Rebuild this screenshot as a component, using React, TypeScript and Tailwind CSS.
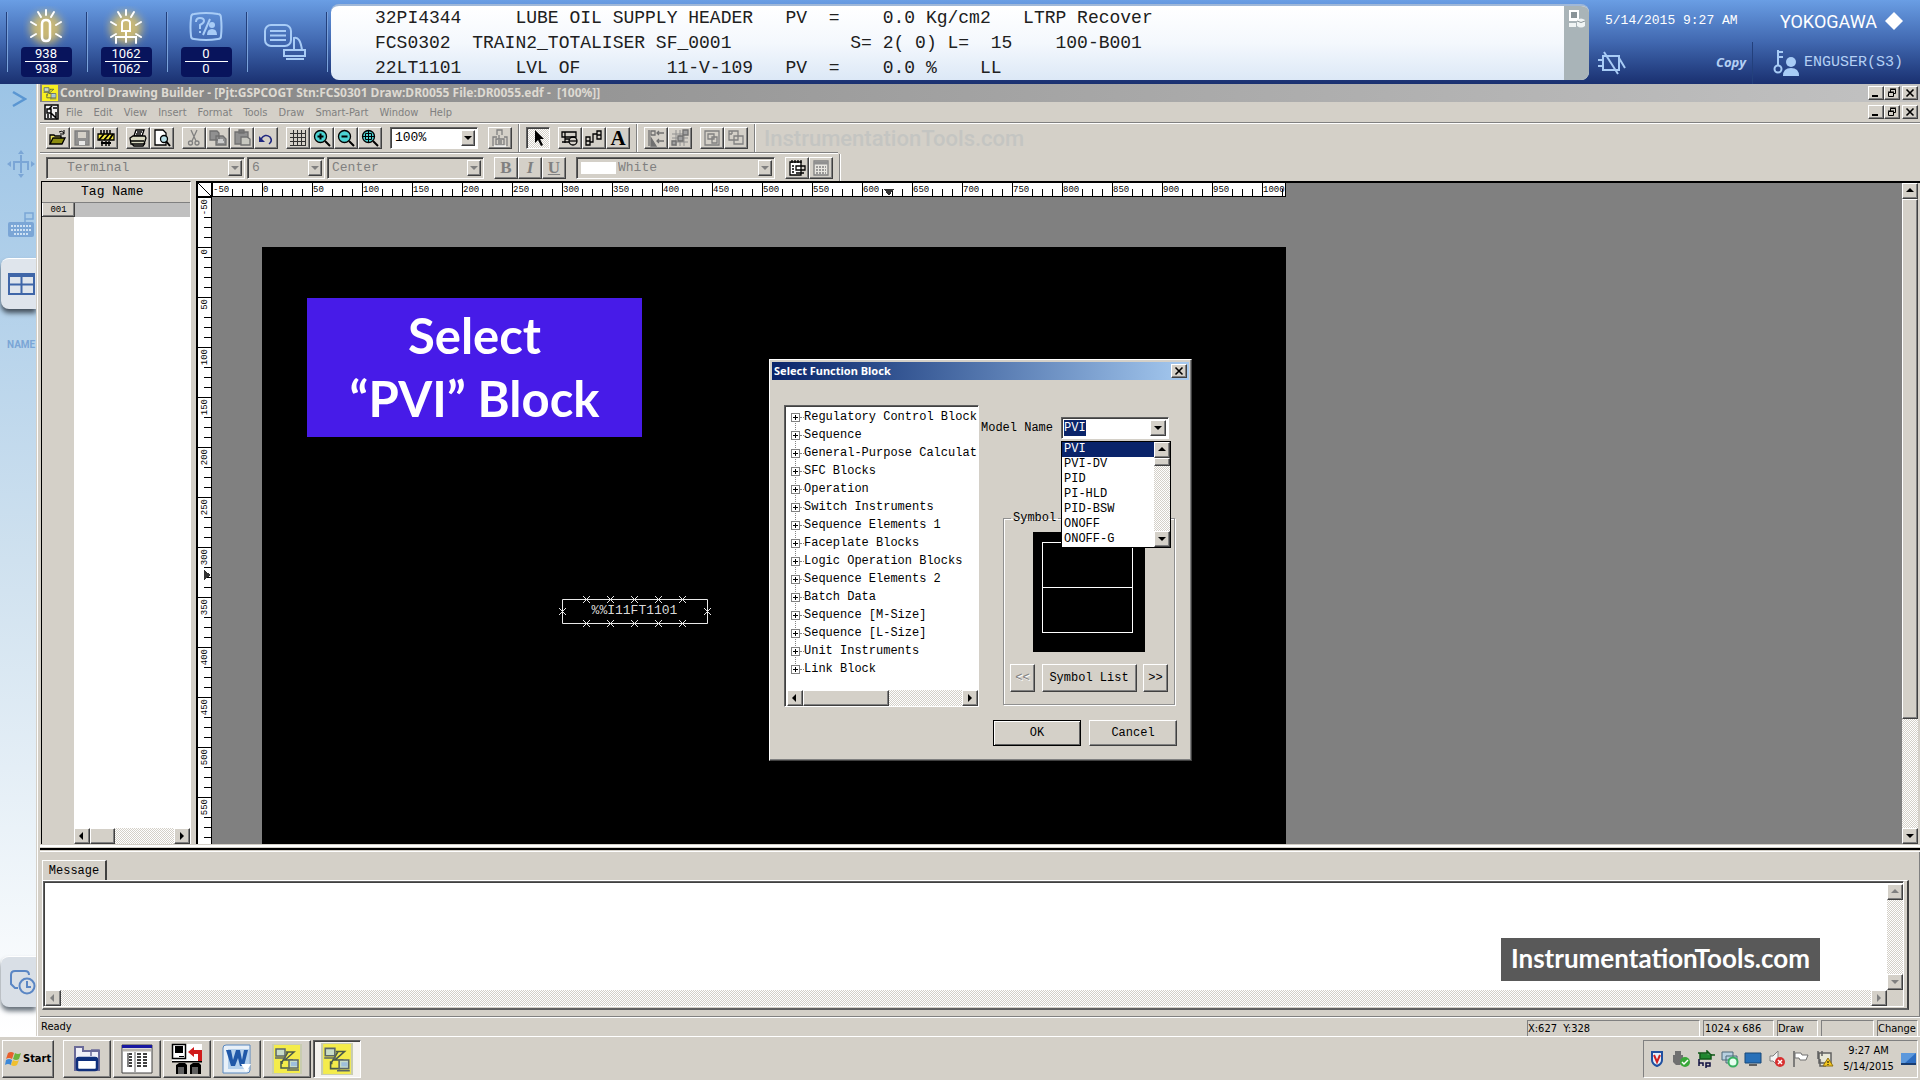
import { FC, ReactNode } from 'react';
import clsx from 'clsx';

const MONO = "font-['Liberation_Mono','Courier_New',monospace]";
const RAISED =
  'bg-[#d4d0c8] border border-t-white border-l-white border-r-[#404040] border-b-[#404040] shadow-[inset_-1px_-1px_0_#808080]';
const SUNKEN =
  'border border-t-[#606060] border-l-[#606060] border-r-white border-b-white shadow-[inset_1px_1px_0_#404040]';
const DITHER =
  'bg-[repeating-conic-gradient(#ffffff_0_25%,#d4d0c8_0_50%)] bg-[length:2px_2px]';

const ALARMS = [
  '32PI4344     LUBE OIL SUPPLY HEADER   PV  =    0.0 Kg/cm2   LTRP Recover',
  'FCS0302  TRAIN2_TOTALISER SF_0001           S= 2( 0) L=  15    100-B001',
  '22LT1101     LVL OF        11-V-109   PV  =    0.0 %    LL',
];

const MENUS = [
  'File',
  'Edit',
  'View',
  'Insert',
  'Format',
  'Tools',
  'Draw',
  'Smart-Part',
  'Window',
  'Help',
];

const TREE = [
  'Regulatory Control Block',
  'Sequence',
  'General-Purpose Calculat',
  'SFC Blocks',
  'Operation',
  'Switch Instruments',
  'Sequence Elements 1',
  'Faceplate Blocks',
  'Logic Operation Blocks',
  'Sequence Elements 2',
  'Batch Data',
  'Sequence [M-Size]',
  'Sequence [L-Size]',
  'Unit Instruments',
  'Link Block',
];

const MODELS = ['PVI', 'PVI-DV', 'PID', 'PI-HLD', 'PID-BSW', 'ONOFF', 'ONOFF-G'];

const H_MARKS = Array.from({ length: 22 }, (_, i) => i * 50 - 50);
const V_MARKS = Array.from({ length: 13 }, (_, i) => i * 50 - 50);

/* Small pieces */

const ARROWS = {
  up: 'M0 5h8L4 1z',
  down: 'M0 2h8L4 6z',
  left: 'M5 0v8L1 4z',
  right: 'M2 0v8l4-4z',
};

const Arrow: FC<{ dir: keyof typeof ARROWS; dim?: boolean }> = ({ dir, dim }) => (
  <svg width="8" height="8" viewBox="0 0 8 8" aria-hidden="true">
    <path d={ARROWS[dir]} fill={dim ? '#808080' : '#000'} />
  </svg>
);

const ScrollButton: FC<{ dir: keyof typeof ARROWS; dim?: boolean }> = ({
  dir,
  dim,
}) => (
  <button
    type="button"
    aria-label={`Scroll ${dir}`}
    className={clsx(RAISED, 'size-4 shrink-0 flex items-center justify-center')}
  >
    <Arrow dir={dir} dim={dim} />
  </button>
);

const Separator: FC = () => (
  <div className="w-0.5 mx-1.5 self-stretch border-l border-l-[#808080] border-r border-r-white" />
);

const Tool: FC<{ label: string; pressed?: boolean; children: ReactNode }> = ({
  label,
  pressed,
  children,
}) => (
  <button
    type="button"
    aria-label={label}
    className={clsx(
      'w-6 h-[22px] flex items-center justify-center',
      pressed ? [SUNKEN, DITHER] : RAISED,
    )}
  >
    {children}
  </button>
);

const Icon: FC<{ children: ReactNode }> = ({ children }) => (
  <svg
    width="18"
    height="18"
    viewBox="0 0 18 18"
    fill="none"
    stroke="#000"
    strokeWidth="1.3"
    aria-hidden="true"
  >
    {children}
  </svg>
);

const Combo: FC<{
  label: string;
  value: string;
  className: string;
  disabled?: boolean;
  swatch?: boolean;
  indent?: string;
}> = ({ label, value, className, disabled, swatch, indent = 'pl-1' }) => (
  <div
    className={clsx(
      SUNKEN,
      'relative h-[22px] flex items-center p-0.5',
      disabled ? 'text-[#808080]' : 'bg-white',
      className,
    )}
  >
    {swatch && <span className="w-[35px] h-3 ml-0.5 bg-white shrink-0" />}
    <select
      aria-label={label}
      disabled={disabled}
      defaultValue={value}
      className={clsx(
        MONO,
        indent,
        'flex-1 min-w-0 h-full appearance-none bg-transparent text-[13px] leading-4 opacity-100 outline-none',
      )}
    >
      <option>{value}</option>
    </select>
    <span
      className={clsx(
        RAISED,
        'w-3.5 h-full flex items-center justify-center pointer-events-none',
      )}
    >
      <Arrow dir="down" dim={disabled} />
    </span>
  </div>
);

const CloseGlyph: FC = () => (
  <svg width="10" height="10" viewBox="0 0 10 10" stroke="#000" strokeWidth="1.600">
    <path d="M1.500 1.500l7 7M8.500 1.500l-7 7" />
  </svg>
);

const WindowButtons: FC = () => (
  <div className="flex pr-0.5">
    <button type="button" aria-label="Minimize" className={clsx(RAISED, 'w-4 h-3.5 flex items-center justify-center')}>
      <svg width="10" height="10" viewBox="0 0 10 10"><path d="M1 7h6v2H1z" /></svg>
    </button>
    <button type="button" aria-label="Restore" className={clsx(RAISED, 'w-4 h-3.5 flex items-center justify-center')}>
      <svg width="10" height="10" viewBox="0 0 10 10" fill="none" stroke="#000">
        <path d="M3.500 4V1.500h5v4H7M3 1h6M1.500 4.500h5v4h-5zM1 4h6" />
      </svg>
    </button>
    <button type="button" aria-label="Close" className={clsx(RAISED, 'w-4 h-3.5 ml-0.5 flex items-center justify-center')}>
      <CloseGlyph />
    </button>
  </div>
);

/* Boxes-and-wires logo of the builder, used in the title bar and the taskbar */
const BuilderIcon: FC<{ size: number; soft?: boolean }> = ({ size, soft }) => (
  <svg width={size} height={size} viewBox="0 0 30 30" aria-hidden="true">
    <path fill={soft ? '#c8ccb0' : '#f8f020'} d="M0 0h30v30H0z" />
    <path fill={soft ? '#f4ec4a' : '#f8f020'} d="M2 1h26v28H2z" />
    <g stroke="#4a5a4a" strokeWidth="1.500" fill="none">
      <path d="M14 8h8l-9 8h8M16 8l-6 10v2M9 17v7h9" />
    </g>
    <g stroke="#5a6668" strokeWidth="1.500" fill="#c8dcc8">
      <path d="M4 5h9v7H4zM17 16h9v8h-9z" />
      <path d="M3 14h11M15 26h12" />
    </g>
    <path fill="#9fc0dc" d="M19 18h6v4h-6z" />
  </svg>
);

/* Header */

const Counter: FC<{
  label: string;
  top: string;
  bottom: string;
  children: ReactNode;
}> = ({ label, top, bottom, children }) => (
  <div className="relative w-20 flex flex-col items-center">
    <span className="absolute left-0 top-3 h-[60px] w-0.5 border-l border-l-[#23407c] border-r border-r-[#7aa2dc]" />
    <button type="button" aria-label={label} className="h-[47px] flex items-center justify-center pt-1.5">
      {children}
    </button>
    <div className="w-[51px] h-[30px] rounded-sm bg-[#08145c] px-1 text-center text-[13px] leading-[14px] text-white font-['Roboto',sans-serif]">
      <div className="border-b border-white">{top}</div>
      <div>{bottom}</div>
    </div>
  </div>
);

const Lamp: FC<{ children: ReactNode }> = ({ children }) => (
  <svg width="46" height="42" viewBox="0 0 46 42" aria-hidden="true">
    <circle cx="23" cy="22" r="16" fill="#e0c468" className="blur-[4px]" opacity="0.85" />
    <g stroke="#fff" strokeWidth="2" fill="none" strokeLinecap="round">
      <path d="M23 4v5M15 6l3 5M31 6l-3 5M8 16l5 3M38 16l-5 3M8 31l5-3M38 31l-5-3" />
      {children}
    </g>
  </svg>
);

const Header: FC = () => (
  <header className="h-[84px] flex shrink-0 bg-linear-to-b from-[#6a9ee4] via-[#4168b0] to-[#1a3070]">
    <div className="w-1.5" />
    <Counter label="Process alarms" top="938" bottom="938">
      <Lamp>
        <path d="M19 31V18q0-4 4-4t4 4v13q0 4-4 4t-4-4z" strokeWidth="2.500" />
      </Lamp>
    </Counter>
    <Counter label="System alarms" top="1062" bottom="1062">
      <Lamp>
        <path d="M19 25v-8q0-3 4-3t4 3v8zM23 25v11M13 37v-6h20v6" />
      </Lamp>
    </Counter>
    <Counter label="Operator guide" top="0" bottom="0">
      <svg width="36" height="30" viewBox="0 0 36 30" fill="none" stroke="#a8ccf6" strokeWidth="2" aria-hidden="true">
        <path d="M6 2q12-2 24 0q3 0 3 4q1 9 0 18q0 3-3 3q-12 2-24 0q-3 0-3-3q-1-9 0-18q0-4 3-4z" />
        <path d="M8 10q0-4 4-4t4 3q0 2-4 4v4M12 19v2M22 7l-7 16" />
        <circle cx="24" cy="13" r="3" fill="#a8ccf6" stroke="none" />
        <path d="M19 23q0-6 5-6t5 6z" fill="#a8ccf6" stroke="none" />
      </svg>
    </Counter>
    <div className="relative w-20 pl-4 pt-5">
      <span className="absolute left-0 top-3 h-[60px] w-0.5 border-l border-l-[#23407c] border-r border-r-[#7aa2dc]" />
      <button type="button" aria-label="Message list">
        <svg width="46" height="42" viewBox="0 0 46 42" fill="none" stroke="#a8ccf6" strokeWidth="2" aria-hidden="true">
          <rect x="3" y="5" width="26" height="21" rx="6" />
          <path d="M8 11h16M8 15.500h16M8 20h16" />
          <path d="M32 30V18q6-2 8 12M22 30h21v6H22zM24 39h18" />
        </svg>
      </button>
    </div>
    <span className="mt-3 h-[60px] w-0.5 border-l border-l-[#23407c] border-r border-r-[#7aa2dc]" />
    <div className="flex flex-1 min-w-0 ml-[3px] my-1 rounded-lg overflow-hidden border-t-2 border-[#a0b8d8] bg-linear-to-b from-white via-[#f4f8fd] to-[#dce8f6]">
      <div className={clsx(MONO, 'flex-1 min-w-0 pl-11 text-lg leading-[25px] text-[#202020]')}>
        {ALARMS.map((line) => (
          <div key={line} className="whitespace-pre">
            {line}
          </div>
        ))}
      </div>
      <div className="w-[25px] bg-[#a9b4b8] pt-1 pl-1">
        <svg width="18" height="18" viewBox="0 0 18 18" aria-hidden="true">
          <path d="M1 0h10v11H1z" fill="#fff" />
          <path d="M3 2h6v6H3z" fill="#8a9498" />
          <path d="M9 10q4-3 8 0v6q-4 3-8 0zM1 13h7v4H1z" fill="#f0f4f4" />
          <path d="M9 11q4 3 8 0" stroke="#8a9498" fill="none" />
        </svg>
      </div>
    </div>
    <div className="w-[331px] shrink-0 flex flex-col">
      <div className="h-[42px] flex items-center justify-between pl-4 pr-[17px]">
        <span className={clsx(MONO, 'text-[13px] text-white')}>5/14/2015 9:27 AM</span>
        <span className="flex items-center gap-2 text-[18px] text-white font-['Roboto',sans-serif]">
          YOKOGAWA
          <svg width="18" height="18" viewBox="0 0 18 18" aria-hidden="true">
            <path d="M9 0l9 9-9 9-9-9z" fill="#fff" />
          </svg>
        </span>
      </div>
      <div className="flex flex-1 text-[#b4d0f4]">
        <div className="w-[164px] flex items-center justify-between pl-2 pr-1.5 border-r border-[#23407c]">
          <button type="button" aria-label="Buzzer off">
            <svg width="30" height="24" viewBox="0 0 30 24" fill="none" stroke="#a8ccf6" strokeWidth="2" aria-hidden="true">
              <path d="M6 5h16v14H6zM1 9h5M1 15h5M7 1l14 22M22 7l6 10" />
            </svg>
          </button>
          <button type="button" className="text-[13px] font-bold italic font-['Open_Sans',sans-serif]">
            Copy
          </button>
        </div>
        <div className="flex items-center gap-1 pl-5">
          <svg width="27" height="28" viewBox="0 0 27 28" fill="#a8ccf6" aria-hidden="true">
            <circle cx="5" cy="20" r="3.500" fill="none" stroke="#a8ccf6" strokeWidth="2" />
            <path d="M4 1h2v16H4zM6 2h4v2H6zM6 7h4v2H6z" />
            <circle cx="18" cy="13" r="5" />
            <path d="M10 27q0-8 8-8t8 8z" />
          </svg>
          <span className={clsx(MONO, 'text-[15px]')}>ENGUSER(S3)</span>
        </div>
      </div>
    </div>
  </header>
);

/* Left strip */

const Sidebar: FC = () => (
  <nav className="w-9 shrink-0 flex flex-col bg-linear-to-b from-[#9cc4e6] via-[#cfe1ef] to-white overflow-hidden">
    <button type="button" aria-label="Expand" className="pl-3 mt-1.5">
      <svg width="15" height="18" viewBox="0 0 15 18" fill="none" stroke="#5a96d2" strokeWidth="2.500">
        <path d="M1 2l12 7-12 7" />
      </svg>
    </button>
    <button type="button" aria-label="Navigate" className="pl-1.5 mt-[42px]">
      <svg width="30" height="28" viewBox="0 0 30 28" fill="none" stroke="#7ba6d6" strokeWidth="2">
        <path d="M15 5v18M8 20v-8h14v8" />
        <path d="M15 0l3 4h-6zM15 28l3-4h-6zM1 14l4-3v6zM29 14l-4-3v6z" fill="#7ba6d6" stroke="none" />
      </svg>
    </button>
    <button type="button" aria-label="Keyboard" className="pl-2 mt-[34px]">
      <svg width="27" height="26" viewBox="0 0 27 26">
        <path d="M17 7V1h8v6h-8v4" fill="none" stroke="#7ba6d6" strokeWidth="1.500" />
        <rect x="0" y="10" width="26" height="15" rx="2" fill="#7ba6d6" />
        <path d="M3 14h21M3 18h21M6 22h14" stroke="#cfe2f4" strokeWidth="2" strokeDasharray="2 1" />
      </svg>
    </button>
    <button
      type="button"
      aria-label="Windows"
      className="ml-px mt-5 h-[51px] pl-[7px] rounded-l-lg bg-[#dfe5ec] border-t border-white shadow-[0_4px_5px_#44505c]"
    >
      <svg width="27" height="24" viewBox="0 0 27 24" fill="none" stroke="#3f66a8" strokeWidth="2">
        <path d="M1 3h25v19H1zM13.500 3v19M1 12.500h25" />
        <path d="M0 3h27" strokeWidth="4" />
      </svg>
    </button>
    <button type="button" className="mt-7 pl-[7px] text-left text-[10px] leading-4 font-bold text-[#7ba6d6] font-['Roboto',sans-serif]">
      NAME
    </button>
    <button
      type="button"
      aria-label="History"
      className="ml-px mt-auto mb-[29px] h-[51px] pl-[7px] rounded-l-lg bg-[#d9dfe6] border-t border-white shadow-[0_4px_5px_#66707a]"
    >
      <svg width="28" height="26" viewBox="0 0 28 26" fill="none" stroke="#5a86c4" strokeWidth="2">
        <path d="M10 19H7L3 15V6q0-4 4-4h10q4 0 4 4" />
        <circle cx="19" cy="17" r="7.500" />
        <path d="M19 12v6h4" />
      </svg>
    </button>
  </nav>
);

/* Window chrome */

const Toolbars: FC = () => (
  <>
    <div className="h-7 flex items-center pl-1.5">
      <div className="flex">
        <Tool label="Open">
          <Icon>
            <path d="M1 15V6h4l1 1h6v2" fill="#e8e060" />
            <path d="M1 15l3-6h12l-3 6z" fill="#8c8c10" />
            <path d="M10 3q3-2 5 1M15 1v4h-4" strokeWidth="1" />
          </Icon>
        </Tool>
        <Tool label="Save">
          <Icon>
            <path d="M2 2h14v14H2z" fill="#909090" stroke="#808080" />
            <path d="M5 3h8v6H5z" fill="#d4d0c8" stroke="none" />
            <path d="M6 12h6v4H6z" fill="#e8e8e8" stroke="none" />
          </Icon>
        </Tool>
        <Tool label="Download">
          <Icon>
            <path d="M4 5V1M7 5V1M10 5V1M13 5V1M5 12v5M9 12v5M12 12v5" strokeWidth="1.500" />
            <path d="M1 5h16v6H1z" fill="#f4e840" />
            <path d="M2 11l5-6M7 11l5-6M12 11l4-6M4 14h10" strokeWidth="1.800" />
          </Icon>
        </Tool>
      </div>
      <div className="flex ml-2">
        <Tool label="Print">
          <Icon>
            <path d="M5 7l2-6h8l-2 6z" fill="#fff" />
            <path d="M1 9l3-2h12l1 2-2 6H2z" fill="#d8d8c0" />
            <path d="M8 3h5M7 5h5M2 12h13M3 15l2 2h9l2-3" />
          </Icon>
        </Tool>
        <Tool label="Print preview">
          <Icon>
            <path d="M2 1h8l3 3v12H2z" fill="#fff" />
            <circle cx="11" cy="10" r="3.500" fill="#b8e0e8" />
            <path d="M13 12l4 5" strokeWidth="2" />
          </Icon>
        </Tool>
      </div>
      <div className="flex ml-2">
        <Tool label="Cut">
          <Icon>
            <g stroke="#808080">
              <path d="M6 1l5 11M12 1L7 12" />
              <circle cx="5.500" cy="14" r="2" />
              <circle cx="12" cy="14" r="2" />
            </g>
          </Icon>
        </Tool>
        <Tool label="Copy">
          <Icon>
            <g stroke="#707070" fill="#909090">
              <path d="M1 2h7l2 2v7H1zM7 7h7l3 3v6H7z" />
              <path d="M9 11h5M9 13h6" stroke="#e0e0e0" />
            </g>
          </Icon>
        </Tool>
        <Tool label="Paste">
          <Icon>
            <g stroke="#707070" fill="#909090">
              <path d="M2 3h13v12H2zM6 1h5v3H6z" />
              <path d="M8 8h6l3 2v6H8z" fill="#c8c8c0" />
            </g>
          </Icon>
        </Tool>
        <Tool label="Undo">
          <Icon>
            <path d="M4 10q4-6 9-2 3 4-1 7" stroke="#202880" strokeWidth="1.500" />
            <path d="M2 7v6h6z" fill="#202880" stroke="none" />
          </Icon>
        </Tool>
      </div>
      <div className="flex ml-2">
        <Tool label="Grid">
          <Icon>
            <path d="M4.500 1v16M8.500 1v16M12.500 1v16M1 4.500h16M1 8.500h16M1 12.500h16M16.500 1v16M1 16.500h16" stroke="#303030" strokeWidth="1" />
          </Icon>
        </Tool>
        <Tool label="Zoom in">
          <Icon>
            <circle cx="7.500" cy="7.500" r="6" fill="#4cd4d4" />
            <path d="M4.500 7.500h6M7.500 4.500v6M12 12l5 5" strokeWidth="2" />
          </Icon>
        </Tool>
        <Tool label="Zoom out">
          <Icon>
            <circle cx="7.500" cy="7.500" r="6" fill="#4cd4d4" />
            <path d="M4.500 7.500h6M12 12l5 5" strokeWidth="2" />
          </Icon>
        </Tool>
        <Tool label="Fit">
          <Icon>
            <circle cx="7.500" cy="7.500" r="6" fill="#4cd4d4" />
            <path d="M12 12l5 5" strokeWidth="2" />
            <path d="M4.500 4.500h6v6h-6zM7.500 2v11M2 7.500h11" strokeWidth="1" />
          </Icon>
        </Tool>
      </div>
      <Combo label="Zoom" value="100%" className="w-[88px] ml-2 mr-2.5" indent="pl-0.5" />
      <Tool label="Tuning">
        <Icon>
          <path d="M2 17V8h4M16 17V8h-3M6 6V1h5v5M8 6v4M5 10h8v6H5zM7 12h4M7 14h4" stroke="#808080" />
          <path d="M3 17h12" stroke="#fff" />
        </Icon>
      </Tool>
      <Separator />
      <Tool label="Select" pressed>
        <Icon>
          <path d="M6 1v13l3-3 3 6 2-1-3-6h4z" fill="#000" stroke="none" />
        </Icon>
      </Tool>
      <div className="flex ml-2">
        <Tool label="Function block">
          <Icon>
            <path d="M1 3h14v5H1zM4 3v11M1 13h7M4 10h4" />
            <circle cx="12" cy="12" r="4" />
            <path d="M8 12h8" />
          </Icon>
        </Tool>
        <Tool label="Wiring">
          <Icon>
            <path d="M1 8h4v8H1zM12 2h4v8h-4zM1 12h4M12 6h4M5 13h3V5h4" />
          </Icon>
        </Tool>
        <Tool label="Text">
          <span className="text-[21px] leading-5 font-bold font-['Liberation_Serif',serif]">A</span>
        </Tool>
      </div>
      <Separator />
      <Tool label="Align">
        <Icon>
          <g stroke="#707070">
            <path d="M2 1v16M4 2h4v4H4zM10 4h7M10 12h7M12 2l-2 2 2 2M12 10l-2 2 2 2" />
            <path d="M4 9v8h5z" fill="#707070" />
          </g>
        </Icon>
      </Tool>
      <Tool label="Snap to grid">
        <Icon>
          <path d="M5 1v16M9 1v16M13 1v16M1 5h16M1 9h16M1 13h16" stroke="#909090" strokeWidth="1" />
          <path d="M12 1h5v5h-5zM7 7h5v5H7zM1 12h4v4H1z" fill="#a0a0a0" stroke="#707070" />
        </Icon>
      </Tool>
      <div className="flex ml-2">
        <Tool label="Group">
          <Icon>
            <path d="M2 2h14v14H2zM5 5h6v5H5zM9 8h5v6H9z" stroke="#808080" />
          </Icon>
        </Tool>
        <Tool label="Ungroup">
          <Icon>
            <path d="M2 2h9v9H2zM7 7h9v8H7zM2 5h3M5 2v3" stroke="#808080" />
          </Icon>
        </Tool>
      </div>
      <Separator />
      <span className="ml-0.5 pt-0.5 text-[22px] leading-6 font-medium text-[#c4c5c2] font-['Roboto',sans-serif]">
        InstrumentationTools.com
      </span>
    </div>
    <div className="w-[798px] h-0.5 border-t border-t-[#808080] bg-white" />
    <div className="h-[27px] flex items-center pl-1.5">
      <Combo label="Font" value="Terminal" className="w-[199px]" indent="pl-[18px]" disabled />
      <Combo label="Font size" value="6" className="w-[78px] ml-0.5" indent="pl-0.5" disabled />
      <Combo label="Alignment" value="Center" className="w-[157px] ml-0.5" indent="pl-0.5" disabled />
      <div className="flex ml-2.5 text-[#808080] text-[17px] leading-4 font-['Liberation_Serif',serif]">
        <Tool label="Bold">
          <b>B</b>
        </Tool>
        <Tool label="Italic">
          <b className="italic">I</b>
        </Tool>
        <Tool label="Underline">
          <b className="underline">U</b>
        </Tool>
      </div>
      <Combo label="Colour" value="White" className="w-[199px] mx-2.5" indent="pl-0.5" disabled swatch />
      <Tool label="Properties">
        <Icon>
          <path d="M2 3h11v13H2z" fill="#fff" />
          <path d="M4 1v3M7 1v3M10 1v3M13 1v3M4 7h2M8 7h9v4H8zM4 10h2M4 13h2M8 14h8" />
        </Icon>
      </Tool>
      <Tool label="Sheet">
        <Icon>
          <path d="M2 2h14v14H2z" fill="#e8e6e0" stroke="#808080" />
          <path d="M2 4h14" stroke="#909090" strokeWidth="3" />
          <path d="M4 8h10M4 11h10M4 14h10" stroke="#808080" strokeDasharray="2 1" />
        </Icon>
      </Tool>
      <Separator />
    </div>
  </>
);

const TagPanel: FC = () => (
  <section className="w-[150px] shrink-0 flex flex-col border-l border-t border-black border-r border-r-white">
    <table className={clsx(MONO, 'w-full border-collapse')}>
      <thead>
        <tr>
          <th colSpan={2} scope="col" className="h-5 p-0 pr-2 text-[13px] leading-5 font-normal border-b border-[#808080]">
            Tag Name
          </th>
        </tr>
      </thead>
      <tbody>
        <tr>
          <td className={clsx(RAISED, 'w-8 h-3.5 p-0 text-center text-[9px] leading-3')}>001</td>
          <td className="bg-[#c0c0c0] p-0" />
        </tr>
      </tbody>
    </table>
    <div className="flex-1 ml-8 bg-white" />
    <div className={clsx(DITHER, 'ml-8 flex h-4')}>
      <ScrollButton dir="left" />
      <div className={clsx(RAISED, 'w-[25px]')} />
      <div className="flex-1" />
      <ScrollButton dir="right" />
    </div>
  </section>
);

/* Rulers: one pixel per drawing unit, minor ticks every ten */

const HRuler: FC = () => (
  <svg width="1074" height="14" className="block shrink-0 bg-white border-r border-black" shapeRendering="crispEdges">
    {H_MARKS.map((mark) => (
      <g key={mark}>
        <path
          d={`M${mark + 50}.5 0v14${[mark === 0 ? 60 : 70, 70, 80, 90]
            .map((x) => `M${mark + x}.5 6v8`)
            .join('')}`}
          stroke="#000"
        />
        <text x={mark + 51} y="9" fontSize="9" fontFamily="Liberation Mono, monospace">
          {mark}
        </text>
      </g>
    ))}
    <path d="M0 13.500h1074" stroke="#000" />
    <path d="M672 6h10l-5 7z" fill="#333" />
  </svg>
);

const VRuler: FC = () => (
  <svg width="14" height="650" className="block bg-white" shapeRendering="crispEdges">
    {V_MARKS.map((mark) => (
      <g key={mark}>
        <path
          d={`M0 ${mark + 50}.5h14${[mark === 0 ? 60 : 70, 70, 80, 90]
            .map((y) => `M6 ${mark + y}.5h8`)
            .join('')}`}
          stroke="#000"
        />
        <text
          transform={`translate(9 ${mark + 52}) rotate(-90)`}
          textAnchor="end"
          fontSize="9"
          fontFamily="Liberation Mono, monospace"
        >
          {mark}
        </text>
      </g>
    ))}
    <path d="M13.500 0v650" stroke="#000" />
    <path d="M6 373v10l7-5z" fill="#333" />
  </svg>
);

const FunctionBlockDialog: FC = () => (
  <div
    role="dialog"
    aria-label="Select Function Block"
    className={clsx(RAISED, 'absolute left-[507px] top-28 w-[423px] p-0.5 text-xs', MONO)}
  >
    <div className="flex items-center justify-between h-[18px] pl-0.5 pr-0.5 bg-linear-to-r from-[#0a246a] to-[#a6caf0]">
      <h2 className="text-[11px] font-bold text-white font-['Noto_Sans',sans-serif]">Select Function Block</h2>
      <button type="button" aria-label="Close" className={clsx(RAISED, 'w-4 h-3.5 flex items-center justify-center')}>
        <CloseGlyph />
      </button>
    </div>
    <div className="flex pl-3 pr-3.5 pt-[25px]">
      <div className={clsx(SUNKEN, 'w-[195px] h-[302px] shrink-0 pl-0.5 pt-0.5 bg-white flex flex-col')}>
        <ul className="relative flex-1">
          <li aria-hidden="true" className="absolute left-2 top-2 h-[252px] border-l border-dotted border-[#808080]" />
          {TREE.map((name) => (
            <li key={name} className="relative flex items-center h-[18px] pl-1 whitespace-nowrap">
              <button type="button" aria-label={`Expand ${name}`} className="size-[9px] shrink-0 border border-[#808080] bg-white">
                <svg width="7" height="7" viewBox="0 0 7 7" className="block" stroke="#000">
                  <path d="M1 3.500h5M3.500 1v5" />
                </svg>
              </button>
              <span className="w-1 shrink-0 border-t border-dotted border-[#808080]" />
              {name}
            </li>
          ))}
        </ul>
        <div className={clsx(DITHER, 'flex h-4')}>
          <ScrollButton dir="left" />
          <div className={clsx(RAISED, 'w-[86px]')} />
          <div className="flex-1" />
          <ScrollButton dir="right" />
        </div>
      </div>
      <div className="flex-1 min-w-0 pt-3">
        <div className="flex items-center pl-0.5">
          <label htmlFor="model-name" className="whitespace-nowrap">
            Model Name
          </label>
          <div className={clsx(SUNKEN, 'relative ml-auto mr-1.5 w-[108px] h-[22px] p-0.5 flex items-center bg-white')}>
            <input
              id="model-name"
              type="text"
              defaultValue="PVI"
              className="w-[22px] h-4 bg-[#0a246a] text-white outline-none"
            />
            <button
              type="button"
              aria-label="Open list"
              className={clsx(RAISED, 'ml-auto w-4 h-full flex items-center justify-center')}
            >
              <Arrow dir="down" />
            </button>
            <div className="absolute z-10 -left-px top-[23px] w-[110px] flex bg-white border border-black">
              <ul role="listbox" aria-label="Model Name" className="flex-1 min-w-0">
                {MODELS.map((model, i) => (
                  <li
                    key={model}
                    role="option"
                    aria-selected={i === 0}
                    className="h-[15px] pl-0.5 leading-[15px] aria-selected:bg-[#0a246a] aria-selected:text-white"
                  >
                    {model}
                  </li>
                ))}
              </ul>
              <div className={clsx(DITHER, 'w-4 flex flex-col')}>
                <ScrollButton dir="up" />
                <div className={clsx(RAISED, 'h-2')} />
                <div className="flex-1" />
                <ScrollButton dir="down" />
              </div>
            </div>
          </div>
        </div>
        <fieldset className="ml-6 mt-[71px] h-[195px] border border-[#909090] px-1.5 shadow-[inset_1px_1px_0_#fff,1px_1px_0_#fff]">
          <legend className="ml-px px-0.5 leading-4">Symbol</legend>
          <svg width="112" height="120" viewBox="0 0 112 120" className="mx-auto mt-1.5" shapeRendering="crispEdges" aria-hidden="true">
            <path d="M0 0h112v120H0z" />
            <path d="M9.500 10.500h90v90h-90zM9 55.500h91" fill="none" stroke="#fff" />
          </svg>
          <div className="flex justify-between mt-3">
            <button type="button" disabled className={clsx(RAISED, 'w-[25px] h-7 text-[#808080] [text-shadow:1px_1px_0_#fff]')}>
              &lt;&lt;
            </button>
            <button type="button" className={clsx(RAISED, 'w-[95px] h-7')}>
              Symbol List
            </button>
            <button type="button" className={clsx(RAISED, 'w-[25px] h-7')}>
              &gt;&gt;
            </button>
          </div>
        </fieldset>
      </div>
    </div>
    <div className="flex justify-end gap-2 pt-[13px] pr-3 pb-3">
      <button type="button" className="w-[88px] h-[26px] border border-black bg-[#d4d0c8] shadow-[inset_1px_1px_0_#fff,inset_-1px_-1px_0_#606060]">
        OK
      </button>
      <button type="button" className={clsx(RAISED, 'w-[88px] h-[26px]')}>
        Cancel
      </button>
    </div>
  </div>
);

/* Terminals of the placed block, in drawing units */
const TERMINALS = [
  [4, 16],
  [149, 16],
  ...[28, 52, 76, 100, 124].flatMap((x) => [
    [x, 4],
    [x, 28],
  ]),
];

const Drawing: FC = () => (
  <div className="relative ml-[50px] mt-[50px] w-[1024px] h-[686px] bg-black">
    <div className="absolute left-[45px] top-[51px] w-[335px] h-[139px] bg-[#471be8] pt-1.5 text-center text-[49px] leading-[63px] font-bold text-white font-['Lato',sans-serif]">
      Select
      <br />
      “PVI” Block
    </div>
    <div className={clsx(MONO, 'absolute left-[296px] top-[348px] w-[153px] h-8 text-center text-[13px] leading-8 text-[#d8d8d8]')}>
      <svg className="absolute inset-0" width="154" height="33" fill="none" stroke="#e8e8e8" aria-hidden="true">
        <path d="M4.500 4.500h145v24h-145z" />
        {TERMINALS.map(([x, y]) => (
          <path key={`${x}-${y}`} d={`M${x - 3} ${y - 3}l7 7m0-7l-7 7`} />
        ))}
      </svg>
      %%I11FT1101
    </div>
    <FunctionBlockDialog />
  </div>
);

const DrawingArea: FC = () => (
  <section className="flex-1 min-w-0 flex ml-[5px] border-l-2 border-t-2 border-black">
    <div className="flex-1 min-w-0 flex flex-col overflow-hidden bg-[#808080]">
      <div className="flex h-3.5 shrink-0">
        <svg width="14" height="14" className="block shrink-0 bg-white">
          <path d="M0 0l14 14M13.500 0v14M0 13.500h14" stroke="#000" />
        </svg>
        <HRuler />
      </div>
      <div className="flex flex-1 min-h-0 overflow-hidden">
        <div className="w-3.5 shrink-0 overflow-hidden bg-white">
          <VRuler />
        </div>
        <div className="flex-1 min-w-0 overflow-hidden">
          <Drawing />
        </div>
      </div>
    </div>
    <div className={clsx(DITHER, 'w-4 mr-0.5 flex flex-col')}>
      <ScrollButton dir="up" />
      <div className={clsx(RAISED, 'h-[520px]')} />
      <div className="flex-1" />
      <ScrollButton dir="down" />
    </div>
  </section>
);

const MessagePane: FC = () => (
  <section className="h-[164px] shrink-0 pl-0.5 pr-2.5 pt-2 pb-1.5 flex flex-col border-r border-[#808080]">
    <button
      type="button"
      className={clsx(MONO, 'self-start w-[65px] h-5 text-xs border-t border-l border-white border-r-2 border-r-[#404040]')}
    >
      Message
    </button>
    <div className="flex-1 min-h-0 pb-px pr-[3px] border-t border-l border-white border-r-2 border-b-2 border-r-[#404040] border-b-[#606060]">
      <div className={clsx(SUNKEN, 'h-full flex flex-col bg-white pl-px pt-0.5')}>
        <div className="relative flex-1 min-h-0 flex">
          <div className="flex-1" />
          <div className={clsx(DITHER, 'w-4 flex flex-col justify-between')}>
            <ScrollButton dir="up" dim />
            <ScrollButton dir="down" dim />
          </div>
          <div className="absolute right-[83px] bottom-[9px] w-[319px] h-[43px] bg-[#595959] text-center text-[26px] leading-10 font-bold text-white font-['Lato',sans-serif]">
            InstrumentationTools.com
          </div>
        </div>
        <div className="flex h-4 bg-[#d4d0c8]">
          <div className={clsx(DITHER, 'flex flex-1 justify-between mr-4')}>
            <ScrollButton dir="left" dim />
            <ScrollButton dir="right" dim />
          </div>
        </div>
      </div>
    </div>
  </section>
);

const StatusCell: FC<{ className: string; children?: ReactNode }> = ({
  className,
  children,
}) => (
  <span
    className={clsx(
      'h-4 leading-4 whitespace-nowrap border-l border-t border-[#808080] border-r border-r-white',
      className,
    )}
  >
    {children}
  </span>
);

const StatusBar: FC = () => (
  <footer className="h-[18px] shrink-0 flex items-center gap-[3px] pl-px pt-px pr-0.5">
    <span className="flex-1">Ready</span>
    <StatusCell className="w-[173px]">X:627&nbsp; Y:328</StatusCell>
    <StatusCell className="w-[71px] pl-px">1024 x 686</StatusCell>
    <StatusCell className="w-[41px]">Draw</StatusCell>
    <StatusCell className="w-[53px]" />
    <StatusCell className="w-[41px]">Change</StatusCell>
  </footer>
);

const TaskButton: FC<{ label: string; active?: boolean; children: ReactNode }> = ({
  label,
  active,
  children,
}) => (
  <button
    type="button"
    aria-label={label}
    className={clsx(
      'w-12 h-[38px] flex items-center justify-center',
      active ? [SUNKEN, 'bg-[#f4f2ee]'] : RAISED,
    )}
  >
    {children}
  </button>
);

const Taskbar: FC = () => (
  <footer className="h-[43px] shrink-0 flex items-center pl-0.5 pr-0.5 pt-px bg-[#d4d0c8]">
    <button type="button" className={clsx(RAISED, 'w-[52px] h-[38px] flex items-center gap-px pl-0.5 text-[11px] font-bold')}>
      <svg width="17" height="16" viewBox="0 0 17 16" aria-hidden="true">
        <path d="M3 2q3-2 6 0L7 8Q4 6 1 8z" fill="#e8602c" />
        <path d="M10 2q3 2 6 0l-2 6q-3 2-6 0z" fill="#6cb43c" />
        <path d="M1 9q3-2 6 0l-1 5q-3-2-6 0z" fill="#3c88d8" />
        <path d="M8 9q3 2 6 0l-2 5q-3 2-6 0z" fill="#f0c030" />
      </svg>
      Start
    </button>
    <div className="flex gap-0.5 ml-[9px]">
      <TaskButton label="System view">
        <svg width="28" height="28" viewBox="0 0 28 28" fill="none" aria-hidden="true">
          <path d="M2 25V2h8v4h16v19z" fill="#f0f0f8" stroke="#6a6a98" strokeWidth="2" />
          <path d="M11 6h7v5M18 5h8v6" stroke="#6a6a98" strokeWidth="1.500" />
          <rect x="4" y="13" width="20" height="12" rx="2" fill="#fff" stroke="#10307c" strokeWidth="2.500" />
          <path d="M4 14h20" stroke="#10307c" strokeWidth="4" />
        </svg>
      </TaskButton>
      <TaskButton label="Builder list">
        <svg width="32" height="30" viewBox="0 0 32 30" fill="none" aria-hidden="true">
          <path d="M1 1h30v28H1z" fill="#fff" stroke="#404040" />
          <path d="M1 2.500h30" stroke="#1818a0" strokeWidth="3" />
          <path d="M2 6h28" stroke="#b8b4ac" strokeWidth="3" />
          <path d="M14 8v20" stroke="#606060" />
          <path d="M7 9v14" stroke="#000" />
          <path d="M8 10h3M8 13h3M8 16h3M8 19h3M8 22h3M16 10h4M22 10h4M16 13h4M22 13h4M16 16h4M22 16h4M16 19h4M22 19h4M16 22h4M22 22h4" stroke="#000" strokeWidth="1.500" />
        </svg>
      </TaskButton>
      <TaskButton label="Connection">
        <svg width="32" height="32" viewBox="0 0 32 32" aria-hidden="true">
          <path d="M1 1h30v18H1z" fill="#fff" />
          <path d="M1.500 1.500h13v14h-13z" fill="#fff" stroke="#000" strokeWidth="1.500" />
          <path d="M4 3h8v7H4zM8 13h5v1H8zM1 18h30v1.500H1zM5 31V22l3-2h6l2 2v9zM19 31V22l3-2h6l2 2v9z" />
          <path d="M7 24h6v7H7zM21 24h6v7h-6z" fill="#606060" />
          <path d="M17 9l6-5v3h8v11h-4v-7h-4v3z" fill="#d01c1c" />
        </svg>
      </TaskButton>
      <TaskButton label="Word">
        <svg width="30" height="30" viewBox="0 0 30 30" aria-hidden="true">
          <path d="M1 4q0-3 3-3h24v25q0 3-3 3H1z" fill="#e8f0f8" stroke="#5888c0" />
          <path d="M6 5h21v20H6z" fill="#b4d0ec" />
          <path d="M4 6h5l2 10 3-10h4l2 10 2-10h4l-4 16h-4l-2-8-3 8H9z" fill="#2058a8" />
          <path d="M19 20h10l-5 8z" fill="#fff" />
        </svg>
      </TaskButton>
      <TaskButton label="Control Drawing Builder">
        <BuilderIcon size={30} soft />
      </TaskButton>
      <TaskButton label="Control Drawing Builder, active" active>
        <BuilderIcon size={32} soft />
      </TaskButton>
    </div>
    <div className="ml-auto w-[275px] h-[38px] flex items-center pl-1 border-l border-t border-[#808080] border-r border-b border-r-white border-b-white">
      <svg width="188" height="18" viewBox="0 0 188 18" fill="none" aria-hidden="true">
        <path d="M4 2h10v8q0 4-5 6-5-2-5-6z" fill="#e8eef8" stroke="#2050a0" strokeWidth="2" />
        <path d="M6 5l3 7 3-7" stroke="#d02020" strokeWidth="2" />
        <path d="M27 1h6v4h-6zM25 5h10v7l-3 3h-4l-3-3z" fill="#707070" />
        <circle cx="37" cy="12" r="5" fill="#38a838" />
        <path d="M34 12l2 2 4-4" stroke="#fff" strokeWidth="1.500" />
        <path d="M50 3h9v-2l4 4h4M52 3v6h11V4" fill="#208830" stroke="#105818" strokeWidth="1.500" />
        <path d="M51 9v7m0-3h4v3M58 18v-5h4v3h-4" stroke="#101040" strokeWidth="1.500" />
        <path d="M74 2h11v8H74zM78 6h11v7H78z" fill="#b8d0e0" stroke="#4c6878" />
        <circle cx="85" cy="12" r="4.500" fill="#e8fff0" stroke="#38b060" strokeWidth="2" />
        <path d="M97 3h16v10H97z" fill="#2870b8" stroke="#184878" />
        <path d="M101 15h8" stroke="#606060" strokeWidth="2" />
        <path d="M122 6h3l5-5v15l-5-5h-3z" fill="#f4f4f4" stroke="#808080" />
        <circle cx="132" cy="12" r="5" fill="#d83030" />
        <path d="M130 10l4 4m0-4l-4 4" stroke="#fff" strokeWidth="1.500" />
        <path d="M146 1v16" stroke="#606060" strokeWidth="1.500" />
        <path d="M147 3h6l1 2h6l-2 5h-6l-1-2h-4z" fill="#fff" stroke="#707070" />
        <path d="M171 3h12v10h-12zM170 1v8M174 1v5M172 9v7h6" fill="#e8e8d8" stroke="#606060" strokeWidth="1.500" />
        <path d="M180 8l5 8h-10z" fill="#f4c820" stroke="#907010" />
        <path d="M180 11v2m0 1v1" stroke="#000" />
      </svg>
      <time className="flex-1 text-center leading-4">
        9:27 AM
        <br />
        5/14/2015
      </time>
      <svg width="16" height="14" viewBox="0 0 16 14" aria-hidden="true">
        <path d="M0 1h15v10H0z" fill="#2c6cc0" />
        <path d="M0 1h15L4 11H0z" fill="#5c98dc" />
        <path d="M0 11h15v2H0z" fill="#183c70" />
      </svg>
    </div>
  </footer>
);

const App: FC = () => (
  <div className="h-screen flex flex-col overflow-hidden bg-[#d4d0c8] text-[11px] text-black font-['DejaVu_Sans_Condensed','Noto_Sans',sans-serif]">
    <Header />
    <div className="flex flex-1 min-h-0">
      <Sidebar />
      <main className="flex-1 min-w-0 flex flex-col ml-px pl-0.5 border-l border-white">
        <div className="h-[18px] shrink-0 flex items-center gap-0.5 pl-0.5 bg-linear-to-r from-[#848484] to-[#c2c2c2]">
          <BuilderIcon size={16} />
          <h1 className="flex-1 text-xs font-bold text-[#dedad2] whitespace-pre font-['Noto_Sans',sans-serif]">
            Control Drawing Builder - [Pjt:GSPCOGT Stn:FCS0301 Draw:DR0055 File:DR0055.edf -  [100%]]
          </h1>
          <WindowButtons />
        </div>
        <div className="h-5 shrink-0 flex items-center pl-1">
          <svg width="15" height="16" viewBox="0 0 15 16" fill="none" stroke="#000" strokeWidth="1.500" aria-hidden="true">
            <path d="M1 1h13v14H1z" fill="#f0f0f0" />
            <path d="M3 5h4v4H3zM8 2l-3 3M9 4h4M7 14V9l5 5V8M4 10v4" />
          </svg>
          <div className="flex flex-1 pl-[7px] pt-0.5 gap-[11px] text-[#808080]">
            {MENUS.map((menu) => (
              <button key={menu} type="button">
                {menu}
              </button>
            ))}
          </div>
          <WindowButtons />
        </div>
        <div className="h-0.5 shrink-0 border-t border-t-[#808080] bg-white" />
        <Toolbars />
        <div className="flex flex-1 min-h-0 pl-px">
          <TagPanel />
          <DrawingArea />
        </div>
        <div className="h-2 shrink-0 pt-px">
          <div className="h-[5px] border-t-2 border-white border-b-2 border-b-black" />
          <div className="h-0.5 border-b border-white" />
        </div>
        <MessagePane />
        <div className="h-0.5 shrink-0 border-t border-t-[#808080] bg-white" />
        <StatusBar />
      </main>
    </div>
    <div className="h-px shrink-0 bg-white" />
    <Taskbar />
  </div>
);

export default App;
